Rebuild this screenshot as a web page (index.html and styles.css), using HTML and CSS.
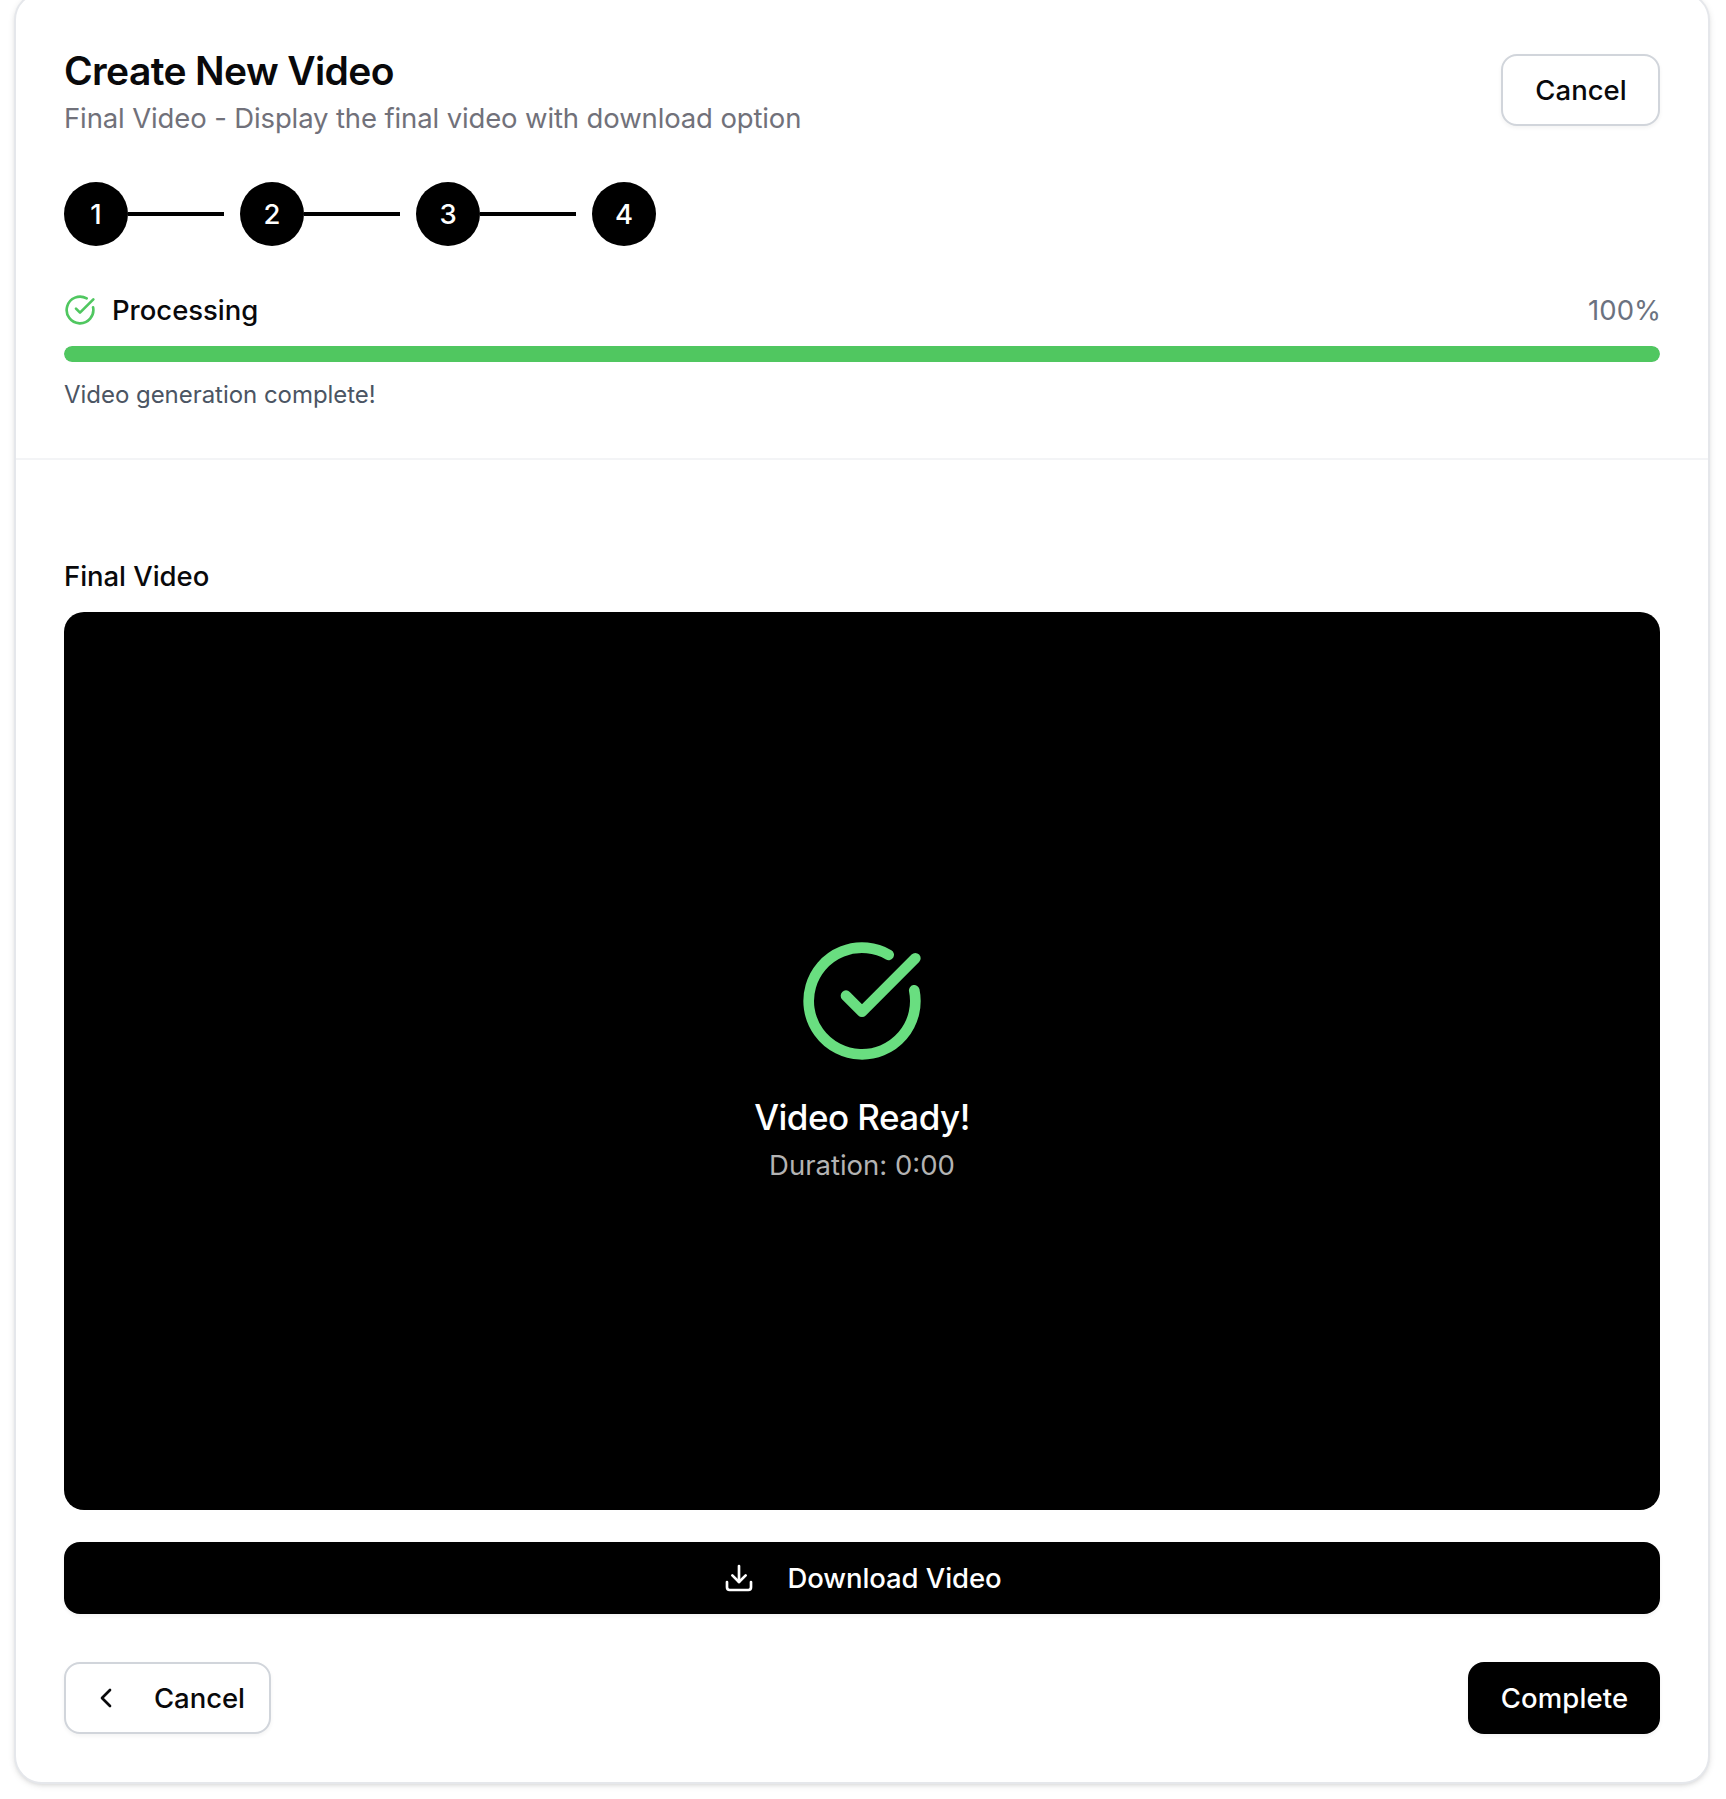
FILE: index.html
```html
<!DOCTYPE html>
<html lang="en">
<head>
  <meta charset="utf-8">
  <title>Create New Video</title>
  <link rel="stylesheet" href="styles.css">
</head>
<body>
  <main class="card">
    <header class="card-header">
      <div class="heading-row">
        <div class="heading">
          <h1 class="title">Create New Video</h1>
          <p class="subtitle">Final Video - Display the final video with download option</p>
        </div>
        <button class="btn btn-outline btn-cancel" type="button">Cancel</button>
      </div>

      <ol class="steps">
        <li class="step"><span class="step-dot">1</span><span class="step-line"></span></li>
        <li class="step"><span class="step-dot">2</span><span class="step-line"></span></li>
        <li class="step"><span class="step-dot">3</span><span class="step-line"></span></li>
        <li class="step"><span class="step-dot">4</span></li>
      </ol>

      <section class="progress">
        <div class="progress-row">
          <svg class="icon icon-done" viewBox="0 0 24 24"><path d="M21.801 10A10 10 0 1 1 17 3.335"/><path d="m9 11 3 3L22 4"/></svg>
          <span class="progress-label">Processing</span>
          <span class="progress-value">100%</span>
        </div>
        <div class="progress-track"><div class="progress-fill" style="width: 100%"></div></div>
        <p class="progress-note">Video generation complete!</p>
      </section>
    </header>

    <div class="card-body">
      <h2 class="label">Final Video</h2>
      <div class="video">
        <svg class="icon icon-ready" viewBox="0 0 24 24"><path d="M21.801 10A10 10 0 1 1 17 3.335"/><path d="m9 11 3 3L22 4"/></svg>
        <p class="video-title">Video Ready!</p>
        <p class="video-duration">Duration: 0:00</p>
      </div>
      <button class="btn btn-solid btn-download" type="button">
        <svg class="icon" viewBox="0 0 24 24"><path d="M21 15v4a2 2 0 0 1-2 2H5a2 2 0 0 1-2-2v-4"/><path d="m7 10 5 5 5-5"/><path d="M12 15V3"/></svg>
        <span>Download Video</span>
      </button>
      <footer class="actions">
        <button class="btn btn-outline btn-back" type="button">
          <svg class="icon" viewBox="0 0 24 24"><path d="m15 18-6-6 6-6"/></svg>
          <span>Cancel</span>
        </button>
        <button class="btn btn-solid btn-complete" type="button">Complete</button>
      </footer>
    </div>
  </main>
</body>
</html>
```
FILE: styles.css
```css
* {
  box-sizing: border-box;
}

html,
body {
  height: 100%;
  margin: 0;
  overflow: hidden;
}

body {
  background: #fff;
  color: #09090b;
  font-family: Inter, "Liberation Sans", sans-serif;
  font-size: 27.5px;
  line-height: 40px;
}

h1,
h2,
p,
ol {
  margin: 0;
  padding: 0;
}

.card {
  display: flow-root;
  width: 1696px;
  margin: -8px 0 0 14px;
  background: #fff;
  border: 2px solid #e5e7eb;
  border-radius: 28px;
  box-shadow: 0 2px 6px rgba(0, 0, 0, 0.1), 0 2px 4px -2px rgba(0, 0, 0, 0.1);
}

.card-header {
  display: flex;
  flex-direction: column;
  gap: 44px;
  padding: 48px;
  border-bottom: 2px solid #f3f4f6;
}

.heading-row {
  display: flex;
  align-items: center;
  justify-content: space-between;
}

.title {
  margin-bottom: -2px;
  font-size: 39px;
  font-weight: 600;
  line-height: 58px;
  letter-spacing: -0.63px;
}

.subtitle {
  color: #71717a;
  letter-spacing: -0.13px;
}

.steps {
  display: flex;
  gap: 16px;
  list-style: none;
}

.step {
  display: flex;
  align-items: center;
}

.step-dot {
  display: flex;
  align-items: center;
  justify-content: center;
  width: 64px;
  height: 64px;
  border-radius: 50%;
  background: #000;
  color: #fff;
  font-weight: 500;
}

.step-line {
  width: 96px;
  height: 4px;
  background: #000;
}

.progress {
  display: flex;
  flex-direction: column;
  gap: 16px;
}

.progress-row {
  display: flex;
  align-items: center;
  gap: 16px;
}

.progress-label {
  font-weight: 500;
  letter-spacing: -0.02px;
}

.progress-value {
  margin-right: -1px;
  margin-left: auto;
  color: #6b7280;
}

.progress-track {
  height: 16px;
  overflow: hidden;
  border-radius: 8px;
  background: #e5e7eb;
}

.progress-fill {
  height: 100%;
  border-radius: 8px;
  background: #50c760;
}

.progress-note {
  margin-bottom: -2px;
  color: #4b5563;
  font-size: 24px;
  line-height: 34px;
  letter-spacing: -0.04px;
}

.card-body {
  padding: 96px 48px 48px;
}

.label {
  margin-bottom: 16px;
  font-size: 27.5px;
  font-weight: 500;
  letter-spacing: -0.05px;
}

.video {
  display: flex;
  flex-direction: column;
  align-items: center;
  justify-content: center;
  height: 898px;
  border-radius: 20px;
  background: #000;
  color: #fff;
}

.video-title {
  margin-top: 24px;
  font-size: 35px;
  font-weight: 500;
  line-height: 56px;
  letter-spacing: -0.53px;
}

.video-duration {
  color: #b3b3b3;
}

.icon {
  flex: none;
  width: 32px;
  height: 32px;
  fill: none;
  stroke: currentColor;
  stroke-width: 2;
  stroke-linecap: round;
  stroke-linejoin: round;
}

.icon-done {
  color: #50c760;
}

.icon-ready {
  width: 128px;
  height: 128px;
  color: #69de80;
}

.btn {
  display: flex;
  align-items: center;
  justify-content: center;
  gap: 32px;
  height: 72px;
  padding: 0 24px;
  border: 0;
  border-radius: 16px;
  font: inherit;
  font-weight: 500;
  box-shadow: 0 2px 4px rgba(0, 0, 0, 0.05);
}

.btn-outline {
  border: 2px solid #d1d5db;
  background: #fff;
  color: #09090b;
}

.btn-solid {
  background: #000;
  color: #fff;
}

.btn-cancel {
  width: 159px;
  padding-right: 23px;
}

.btn-download {
  width: 100%;
  margin-top: 32px;
  padding-right: 23px;
  letter-spacing: -0.08px;
}

.btn-back {
  width: 207px;
  letter-spacing: -0.05px;
}

.btn-complete {
  width: 192px;
  padding-right: 23px;
  letter-spacing: 0.1px;
}

.actions {
  display: flex;
  justify-content: space-between;
  margin-top: 48px;
}
```
